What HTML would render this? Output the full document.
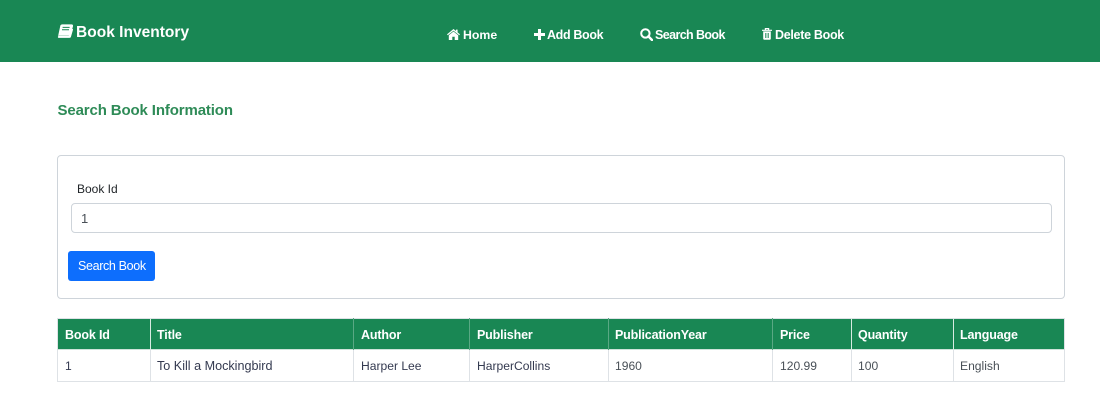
<!DOCTYPE html>
<html><head><meta charset="utf-8">
<style>
html,body{margin:0;padding:0;background:#fff;width:1100px;height:410px;overflow:hidden}
body{font-family:"Liberation Sans",sans-serif;font-size:13px;color:#212529;position:relative}
.a{position:absolute;white-space:nowrap;line-height:16px}
.nav{position:absolute;left:0;top:0;width:1100px;height:62px;background:#198754}
.w{color:#fff;font-weight:bold}
.box{position:absolute;box-sizing:border-box}
svg{position:absolute;display:block}
.th{color:#fff;font-weight:bold;top:327px;font-size:12.5px;letter-spacing:-.15px}
.td{top:358px;color:#343a50;font-size:12.1px}
.vh{position:absolute;top:318px;width:1px;height:32px;background:#5aa884}
.vd{position:absolute;top:350px;width:1px;height:32px;background:#dee2e6}
</style></head>
<body>
<div class="nav"></div>

<svg style="left:57px;top:24px" width="16" height="15" viewBox="0 0 16 15"><path d="M4.5 1H14.6c.7 0 1 .5.8 1.2L13 11.2c-.2.7-.7 1.1-1.4 1.1H2.6c-1 0-1.4.7-.9 1H12.4c.5 0 .9-.2 1-.7L15.6 5" fill="none" stroke="#fff" stroke-width="1.2"/><path d="M4.2.7H14.7c.6 0 .9.5.7 1.1L13 10.6c-.2.6-.6.9-1.2.9H2.5C1.7 11.5 1 12 1 12.5L3.2 2.2C3.4 1.3 3.7.7 4.2.7Z" fill="#fff"/><path d="M5.6 3.4H12.6M5 5.8H12" stroke="#198754" stroke-width="1"/></svg>
<div class="a w" style="left:76px;top:25px;font-size:15.5px;letter-spacing:.02px">Book Inventory</div>

<svg style="left:447px;top:29px" width="13" height="11" viewBox="0 0 13 11"><path d="M6.5 0 0 5.4l.8.9L6.5 1.7l5.7 4.6.8-.9-2.4-2V.6H9v1.4Z" fill="#fff"/><path d="M1.8 6.3 6.5 2.5 11.2 6.3V11H7.7V7.8H5.3V11H1.8Z" fill="#fff"/></svg>
<div class="a w" style="left:463px;top:27px;font-size:12.3px">Home</div>

<svg style="left:534px;top:29px" width="11" height="11" viewBox="0 0 11 11"><path d="M4 0H7V4H11V7H7V11H4V7H0V4H4Z" fill="#fff"/></svg>
<div class="a w" style="left:547px;top:27px;font-size:12.5px;letter-spacing:-.35px">Add Book</div>

<svg style="left:640px;top:28px" width="13" height="13" viewBox="0 0 13 13"><circle cx="5.4" cy="5.4" r="4.2" fill="none" stroke="#fff" stroke-width="2"/><path d="M8.4 8.4 12 12" stroke="#fff" stroke-width="2.4" stroke-linecap="round"/></svg>
<div class="a w" style="left:655px;top:27px;font-size:12.5px;letter-spacing:-.6px">Search Book</div>

<svg style="left:762px;top:28px" width="10" height="12" viewBox="0 0 10 12"><path d="M3.4 1.8V.6H6.6V1.8M0 2.3H10" fill="none" stroke="#fff" stroke-width="1.2"/><path d="M1.2 3.4H8.8V10.6C8.8 11.3 8.3 11.7 7.8 11.7H2.2C1.7 11.7 1.2 11.3 1.2 10.6Z" fill="#fff"/><path d="M3.4 5V10M5 5V10M6.6 5V10" stroke="#198754" stroke-width=".7"/></svg>
<div class="a w" style="left:775px;top:27px;font-size:12.5px;letter-spacing:-.3px">Delete Book</div>

<div class="a" style="left:57.5px;top:103px;font-size:15px;font-weight:bold;color:#2e8b57;letter-spacing:-.13px">Search Book Information</div>

<div class="box" style="left:57px;top:155px;width:1008px;height:144px;border:1px solid #ced4da;border-radius:4px"></div>
<div class="a" style="left:77px;top:181px;font-size:12px;color:#212529">Book Id</div>
<div class="box" style="left:71px;top:203px;width:981px;height:30px;border:1px solid #ced4da;border-radius:4px"></div>
<div class="a" style="left:81px;top:211px;font-size:13px;color:#495057">1</div>
<div class="box" style="left:68px;top:251px;width:87px;height:30px;background:#0d6efd;border-radius:3px"></div>
<div class="a" style="left:78px;top:258px;font-size:12.5px;color:#fff;letter-spacing:-.35px">Search Book</div>

<div class="box" style="left:57px;top:318px;width:1008px;height:32px;background:#198754;border:1px solid #dee2e6;border-bottom:1px solid #cfe3da"></div>
<div class="box" style="left:57px;top:350px;width:1008px;height:32px;border:1px solid #dee2e6;border-top:0"></div>
<div class="vh" style="left:150px;background:#d8ebe2"></div><div class="vh" style="left:353px"></div><div class="vh" style="left:469px"></div><div class="vh" style="left:608px"></div><div class="vh" style="left:772px"></div><div class="vh" style="left:851px;background:#d8ebe2"></div><div class="vh" style="left:953px;background:#d8ebe2"></div>
<div class="vd" style="left:150px"></div><div class="vd" style="left:353px"></div><div class="vd" style="left:469px"></div><div class="vd" style="left:608px"></div><div class="vd" style="left:772px"></div><div class="vd" style="left:851px"></div><div class="vd" style="left:953px"></div>

<div class="a th" style="left:65px">Book Id</div>
<div class="a th" style="left:157px">Title</div>
<div class="a th" style="left:361px">Author</div>
<div class="a th" style="left:477px">Publisher</div>
<div class="a th" style="left:615px;letter-spacing:-.15px">PublicationYear</div>
<div class="a th" style="left:780px">Price</div>
<div class="a th" style="left:858px">Quantity</div>
<div class="a th" style="left:960px">Language</div>

<div class="a td" style="left:65px">1</div>
<div class="a td" style="left:157px;font-size:12.6px">To Kill a Mockingbird</div>
<div class="a td" style="left:361px">Harper Lee</div>
<div class="a td" style="left:477px">HarperCollins</div>
<div class="a td" style="left:615px;color:#495057">1960</div>
<div class="a td" style="left:780px;color:#495057">120.99</div>
<div class="a td" style="left:858px;color:#495057">100</div>
<div class="a td" style="left:960px;color:#495057">English</div>
</body></html>
